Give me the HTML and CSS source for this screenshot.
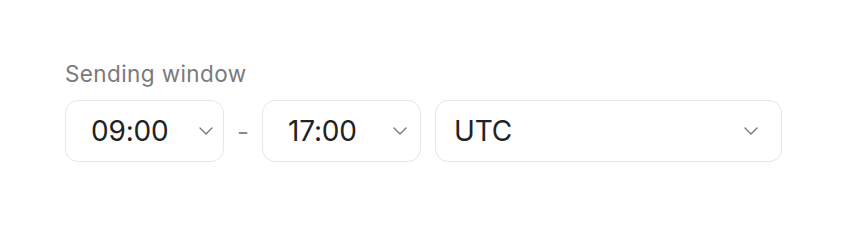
FILE: index.html
```html
<!DOCTYPE html>
<html lang="en">
<head>
  <meta charset="UTF-8" />
  <meta name="viewport" content="width=device-width, initial-scale=1.0" />
  <title>Sending window</title>
  <link rel="stylesheet" href="styles.css">
</head>
<body>
  <div class="field">
    <div class="field-label">Sending window</div>
    <div class="field-row">
      <div class="select time-select">
        <span class="select-value">09:00</span>
        <svg class="chevron" width="14" height="8" viewBox="0 0 14 8"><path d="M1 1l6 6 6-6" fill="none" stroke="#777" stroke-width="1.4" stroke-linecap="round" stroke-linejoin="round"/></svg>
      </div>
      <span class="range-dash">-</span>
      <div class="select time-select end">
        <span class="select-value">17:00</span>
        <svg class="chevron" width="14" height="8" viewBox="0 0 14 8"><path d="M1 1l6 6 6-6" fill="none" stroke="#777" stroke-width="1.4" stroke-linecap="round" stroke-linejoin="round"/></svg>
      </div>
      <div class="select tz-select">
        <span class="select-value">UTC</span>
        <svg class="chevron" width="14" height="8" viewBox="0 0 14 8"><path d="M1 1l6 6 6-6" fill="none" stroke="#777" stroke-width="1.4" stroke-linecap="round" stroke-linejoin="round"/></svg>
      </div>
    </div>
  </div>
</body>
</html>
```

FILE: styles.css
```css
* {
  margin: 0;
  padding: 0;
  box-sizing: border-box;
  font-family: Inter, 'Noto Sans', sans-serif;
}

body {
  background: #fff;
  padding: 60px 0 0 65px;
}

.field-label {
  font-size: 22.5px;
  line-height: 27px;
  letter-spacing: 0.4px;
  color: #7a7a7a;
  margin-bottom: 13px;
}

.field-row {
  display: flex;
  align-items: center;
}

.select {
  display: flex;
  align-items: center;
  height: 62px;
  border: 1px solid #e6e6e6;
  border-radius: 13px;
  padding: 0 10px 0 25px;
  background: #fff;
}

.select-value {
  font-size: 28px;
  color: #222;
  letter-spacing: -0.2px;
}

.chevron {
  margin-left: auto;
}

.time-select {
  width: 159px;
}

.time-select.end {
  padding-right: 13px;
}

.range-dash {
  width: 38px;
  text-align: center;
  font-size: 26px;
  color: #8a8a8a;
}

.tz-select {
  width: 347px;
  margin-left: 14px;
  padding: 0 23px 0 18px;
}
```
